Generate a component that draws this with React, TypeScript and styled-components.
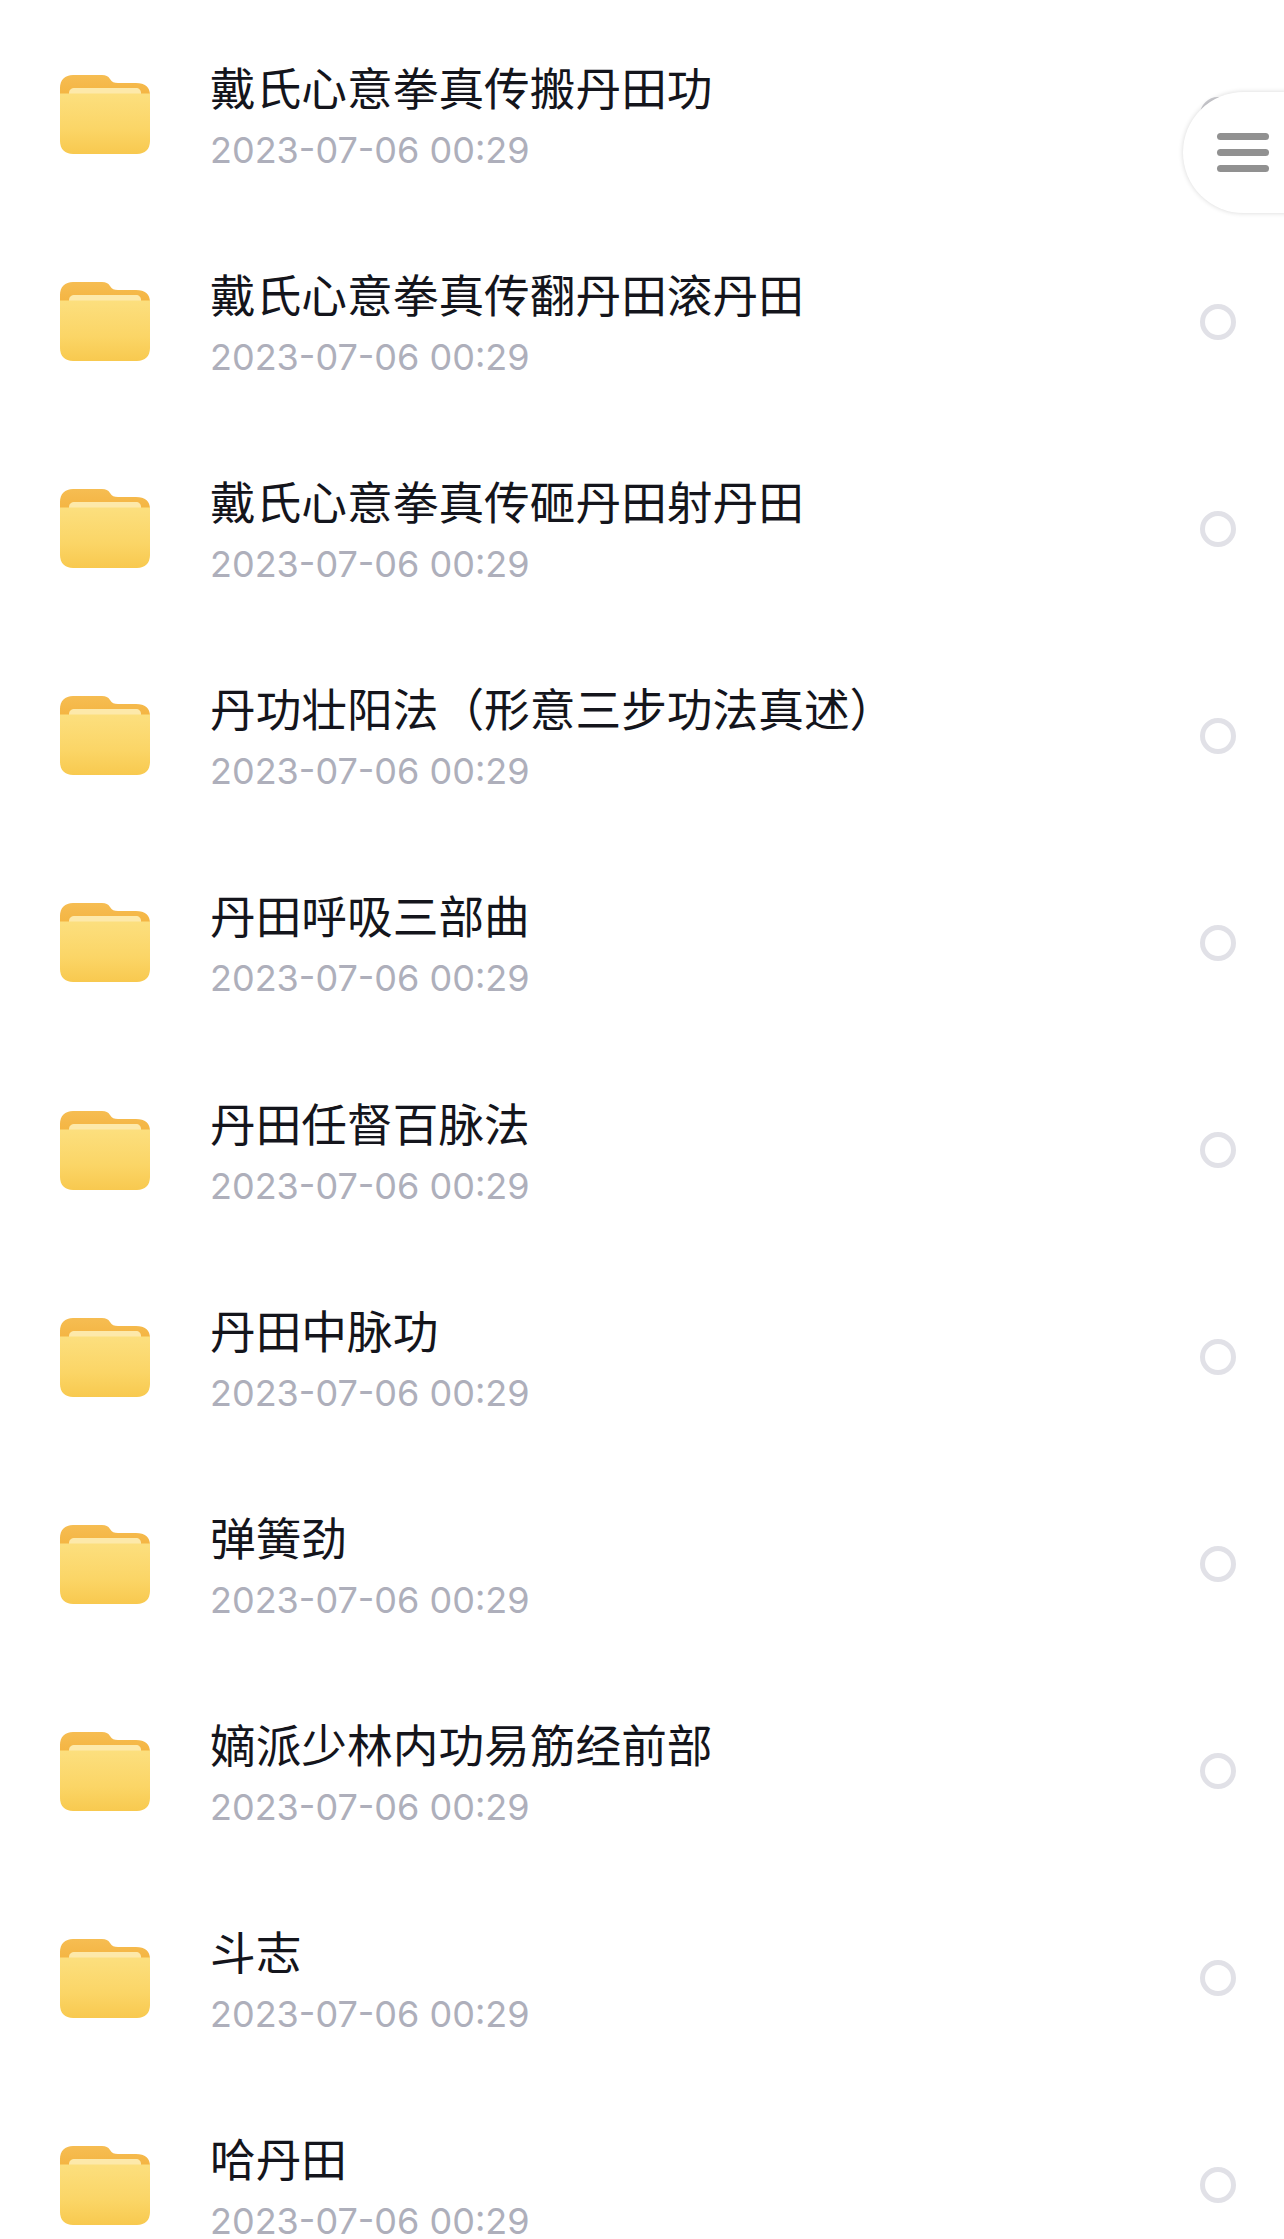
import styled, { createGlobalStyle } from "styled-components";

const GlobalStyle = createGlobalStyle`
  html, body {
    margin: 0;
    padding: 0;
    background: #fff;
  }
`;

const Page = styled.div`
  position: relative;
  width: 1284px;
  height: 2239px;
  overflow: hidden;
  padding-top: 11px;
  box-sizing: border-box;
  background: #fff;
  font-family: "Noto Sans CJK SC", "Liberation Sans", sans-serif;
`;

const List = styled.ul`
  list-style: none;
  margin: 0;
  padding: 0;
`;

const Row = styled.li`
  display: flex;
  align-items: center;
  height: 207.1px;
  padding: 0 48px 0 60px;
  box-sizing: border-box;
`;

const FolderIcon = styled.svg`
  flex: none;
  width: 90px;
  height: 79px;
  margin-right: 60px;
`;

const Info = styled.div`
  flex: 1;
  min-width: 0;
  display: flex;
  flex-direction: column;
  gap: 19px;
  padding-top: 6px;
`;

const Title = styled.div`
  font-size: 45.7px;
  line-height: 46px;
  color: #14151c;
`;

const Time = styled.div`
  font-family: Inter, "Liberation Sans", sans-serif;
  font-size: 36px;
  line-height: 44px;
  color: #aeafbb;
`;

const Radio = styled.span<{ $shaded?: boolean }>`
  flex: none;
  width: 36px;
  height: 36px;
  box-sizing: border-box;
  border: 5px solid ${(p) => (p.$shaded ? "#cbcbd0" : "#e1e1e7")};
  border-radius: 50%;
`;

const MenuTab = styled.div`
  position: absolute;
  top: 92px;
  left: 1183px;
  width: 160px;
  height: 121px;
  box-sizing: border-box;
  padding-left: 34px;
  display: flex;
  flex-direction: column;
  justify-content: center;
  gap: 9.5px;
  background: #fff;
  border-radius: 61px;
  box-shadow: 0 0 5px rgba(0, 0, 0, 0.16);
`;

const MenuBar = styled.span`
  width: 52px;
  height: 6.5px;
  border-radius: 3.5px;
  background: #919191;
`;

const items = [
  "戴氏心意拳真传搬丹田功",
  "戴氏心意拳真传翻丹田滚丹田",
  "戴氏心意拳真传砸丹田射丹田",
  "丹功壮阳法（形意三步功法真述）",
  "丹田呼吸三部曲",
  "丹田任督百脉法",
  "丹田中脉功",
  "弹簧劲",
  "嫡派少林内功易筋经前部",
  "斗志",
  "哈丹田",
];

function Folder() {
  return (
    <FolderIcon viewBox="0 0 90 79">
      <defs>
        <linearGradient id="folderFront" x1="0" y1="0" x2="0" y2="1">
          <stop offset="0" stopColor="#fcdf7e" />
          <stop offset="0.6" stopColor="#fbd566" />
          <stop offset="1" stopColor="#f8c94f" />
        </linearGradient>
        <linearGradient id="folderBack" x1="0" y1="0" x2="0" y2="1">
          <stop offset="0" stopColor="#f6bd52" />
          <stop offset="1" stopColor="#f3b03a" />
        </linearGradient>
      </defs>
      <path
        d="M0 13C0 5 5 0 13 0H42C46 0 48 1 50 4C52 7 54 8 58 8H76C85 8 90 12 90 20V30H0Z"
        fill="url(#folderBack)"
      />
      <path
        d="M9 18C9 15 11 13 15 13H76C79 13 81 15 81 18V24H9Z"
        fill="#fde9aa"
      />
      <path
        d="M0 18.5H90V66C90 74 85 79 77 79H13C5 79 0 74 0 66Z"
        fill="url(#folderFront)"
      />
    </FolderIcon>
  );
}

export default function App() {
  return (
    <Page>
      <GlobalStyle />
      <List>
        {items.map((name, i) => (
          <Row key={name}>
            <Folder />
            <Info>
              <Title>{name}</Title>
              <Time>2023-07-06 00:29</Time>
            </Info>
            <Radio $shaded={i === 0} />
          </Row>
        ))}
      </List>
      <MenuTab>
        <MenuBar />
        <MenuBar />
        <MenuBar />
      </MenuTab>
    </Page>
  );
}
